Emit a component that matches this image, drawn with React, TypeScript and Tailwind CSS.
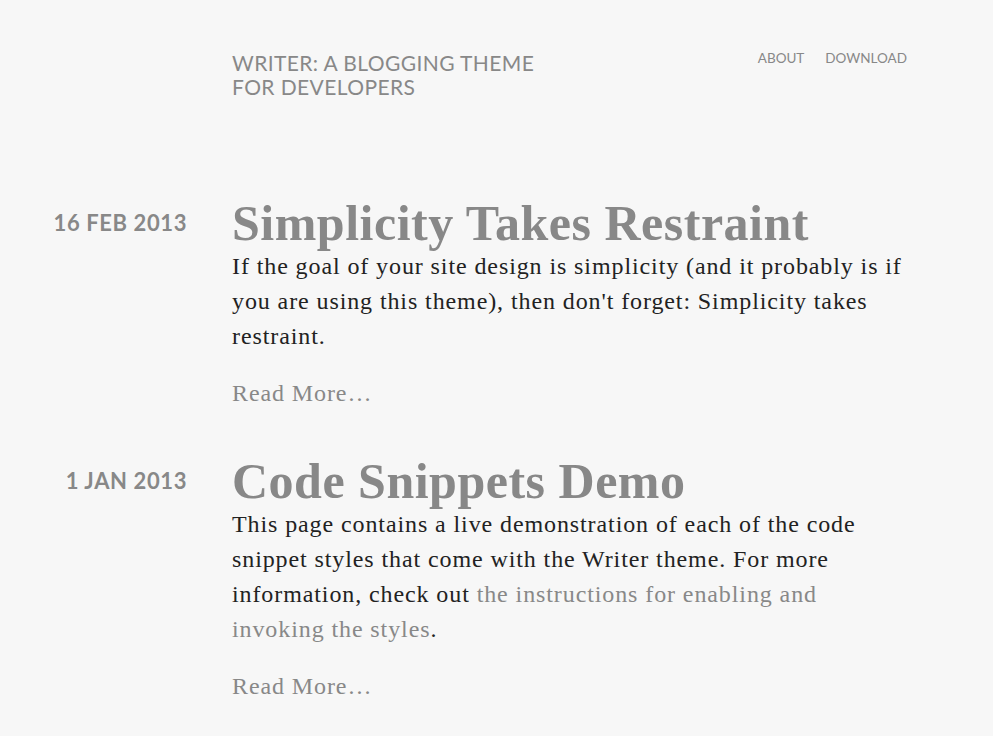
import React from "react";

const serif = "font-['Liberation_Serif','DejaVu_Serif',serif]";

function Post({ date, title, children }: { date: string; title: string; children: React.ReactNode }) {
  return (
    <article className="flex">
      <div className="w-[187px] shrink-0 text-right font-['Lato',sans-serif] font-bold text-[22px] leading-[52px] tracking-[0.6px] text-[#888] uppercase">
        {date}
      </div>
      <div className="ml-[45px] w-[680px]">
        <h2 className={`${serif} font-bold text-[50px] leading-[52px] tracking-[0.5px] text-[#888]`}>{title}</h2>
        <p className={`${serif} text-[24px] leading-[35px] tracking-[0.9px] text-[#222]`}>{children}</p>
        <a className={`${serif} block mt-[22px] text-[24px] leading-[35px] tracking-[0.9px] text-[#888]`}>Read More…</a>
      </div>
    </article>
  );
}

export default function App() {
  return (
    <div className="min-h-screen bg-[#f7f7f7]">
      <header className="flex justify-between pl-[232px] pr-[86px] pt-[51px]">
        <h1 className="w-[330px] font-['Lato',sans-serif] text-[21px] leading-[24px] tracking-[0.4px] uppercase text-[#888]">
          Writer: A Blogging Theme for Developers
        </h1>
        <nav className="flex gap-[21px] font-['Lato',sans-serif] text-[13.5px] leading-[14px] uppercase text-[#888]">
          <a>About</a>
          <a>Download</a>
        </nav>
      </header>
      <main className="mt-[98px] flex flex-col gap-[44px]">
        <Post date="16 Feb 2013" title="Simplicity Takes Restraint">
          If the goal of your site design is simplicity (and it probably is if you are using this theme), then don't forget: Simplicity takes restraint.
        </Post>
        <Post date="1 Jan 2013" title="Code Snippets Demo">
          This page contains a live demonstration of each of the code snippet styles that come with the Writer theme. For more information, check out{" "}
          <a className="text-[#888]">the instructions for enabling and invoking the styles</a>.
        </Post>
      </main>
    </div>
  );
}
